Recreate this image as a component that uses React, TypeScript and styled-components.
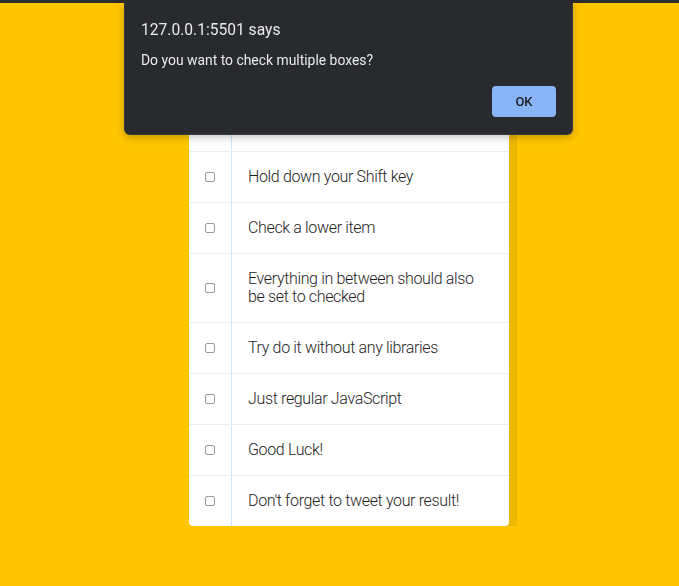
import React from 'react';
import styled, { createGlobalStyle } from 'styled-components';

const GlobalStyle = createGlobalStyle`
  html, body {
    margin: 0;
    padding: 0;
    background: #ffc600;
    font-family: Roboto, "Liberation Sans", Arial, sans-serif;
  }
`;

const TopBar = styled.div`
  height: 3px;
  background: #2b2c2f;
`;

const Inbox = styled.div`
  width: 320px;
  margin: 47px 0 0 189px;
  background: #ffffff;
  border-radius: 4px;
  box-shadow: 8px 8px 0 rgba(0, 0, 0, 0.075);
`;

const Item = styled.label`
  display: flex;
  align-items: center;
  border-bottom: 1px solid #eceef2;

  &:last-child {
    border-bottom: 0;
  }
`;

const Checkbox = styled.input`
  appearance: none;
  width: 10px;
  height: 10px;
  margin: 16px;
  box-sizing: border-box;
  border: 1px solid #9a9a9a;
  border-radius: 2px;
  background: #fff;
  flex-shrink: 0;
`;

const ItemText = styled.p`
  flex: 1;
  margin: 0;
  padding: 16px;
  font-family: Roboto, "Liberation Sans", sans-serif;
  font-size: 16px;
  line-height: 18px;
  font-weight: 300;
  letter-spacing: -0.35px;
  color: #1e1e1e;
  border-left: 1px solid #d1e2ff;
`;

const Dialog = styled.div`
  position: fixed;
  top: 3px;
  left: 124px;
  width: 449px;
  box-sizing: border-box;
  padding: 17px 16px 17px 16px;
  background: #292a2d;
  border: 1px solid #3a3b3e;
  border-top: 0;
  border-radius: 0 0 6px 6px;
  box-shadow: 0 2px 8px rgba(0, 0, 0, 0.25);
  font-family: Roboto, "Liberation Sans", sans-serif;
  color: #e8eaed;
`;

const DialogTitle = styled.div`
  font-size: 15.6px;
  line-height: 20px;
`;

const DialogMessage = styled.div`
  margin-top: 11px;
  font-size: 13.9px;
  line-height: 18px;
`;

const DialogActions = styled.div`
  display: flex;
  justify-content: flex-end;
  margin-top: 17px;
`;

const OkButton = styled.button`
  width: 64px;
  height: 31px;
  border: 0;
  border-radius: 4px;
  background: #8ab4f8;
  color: #202124;
  font-family: Roboto, "Liberation Sans", sans-serif;
  font-size: 13px;
  font-weight: 500;
`;

const items = [
  'This is an inbox layout.',
  'Check one item',
  'Hold down your Shift key',
  'Check a lower item',
  'Everything in between should also be set to checked',
  'Try do it without any libraries',
  'Just regular JavaScript',
  'Good Luck!',
  "Don't forget to tweet your result!",
];

export default function App() {
  return (
    <>
      <GlobalStyle />
      <TopBar />
      <Inbox>
        {items.map((text) => (
          <Item key={text}>
            <Checkbox type="checkbox" />
            <ItemText>{text}</ItemText>
          </Item>
        ))}
      </Inbox>
      <Dialog>
        <DialogTitle>127.0.0.1:5501 says</DialogTitle>
        <DialogMessage>Do you want to check multiple boxes?</DialogMessage>
        <DialogActions>
          <OkButton>OK</OkButton>
        </DialogActions>
      </Dialog>
    </>
  );
}
